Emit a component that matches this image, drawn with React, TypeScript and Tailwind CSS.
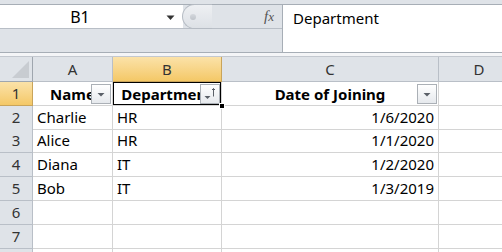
import React from 'react';

const font = { fontFamily: '"Noto Sans", "Open Sans", Arial, sans-serif' };

type Row = { n: number | null; h: string; cells: [string, string, string, string] };

const rows: Row[] = [
  { n: 2, h: 'h-[23px]', cells: ['Charlie', 'HR', '1/6/2020', ''] },
  { n: 3, h: 'h-[24px]', cells: ['Alice', 'HR', '1/1/2020', ''] },
  { n: 4, h: 'h-[24px]', cells: ['Diana', 'IT', '1/2/2020', ''] },
  { n: 5, h: 'h-[24px]', cells: ['Bob', 'IT', '1/3/2019', ''] },
  { n: 6, h: 'h-[24px]', cells: ['', '', '', ''] },
  { n: 7, h: 'h-[24px]', cells: ['', '', '', ''] },
  // next row only peeks in at the bottom edge
  { n: null, h: 'h-[24px]', cells: ['', '', '', ''] },
];

const gridCols = 'grid grid-cols-[33px_80px_109px_217px_80px]';

function FilterButton({ sorted }: { sorted?: boolean }) {
  return (
    <div className="absolute right-[1px] top-[2px] h-[20px] w-[20px] border border-[#abb0b6] bg-gradient-to-b from-white to-[#e6e9ed]">
      <svg width="18" height="18" viewBox="0 0 18 18" className="block">
        {sorted ? (
          <>
            <path d="M3.5 11h6l-3 3z" fill="#5b6068" />
            <path d="M12.5 3.5v8" stroke="#5b6068" strokeWidth="1" />
            <path d="M11 5l1.5-1.5L14 5" stroke="#5b6068" strokeWidth="1" fill="none" />
          </>
        ) : (
          <path d="M5.5 8h7l-3.5 3.5z" fill="#5b6068" />
        )}
      </svg>
    </div>
  );
}

function HeaderCell({ text, sorted, selected }: { text: string; sorted?: boolean; selected?: boolean }) {
  return (
    <div className="relative flex h-[24px] items-center justify-center overflow-hidden border-b border-r border-[#d4d4d4] bg-white pt-[1px] text-[15px] font-bold text-black">
      <span className="whitespace-nowrap">{text}</span>
      <FilterButton sorted={sorted} />
      {selected && (
        <div className="pointer-events-none absolute -left-[1px] -top-[1px] bottom-[-1px] right-[-1px] border-2 border-black" />
      )}
    </div>
  );
}

export default function App() {
  return (
    <div className="relative h-[252px] w-[502px] overflow-hidden bg-white" style={font}>
      {/* formula bar */}
      <div className="h-[4px] bg-[#dfe3e8]" />
      <div className="flex h-[49px] border-y border-[#a7aeb6] bg-[#dfe3e8]">
        <div className="flex w-[283px] flex-col border-r border-[#a7aeb6]">
          <div className="flex h-[24px] border-b border-[#b8bec6]">
            <div className="relative flex w-[183px] items-center bg-white">
              <span className="w-[160px] text-center text-[16px] text-black">B1</span>
              <svg width="9" height="6" viewBox="0 0 9 6" className="absolute left-[166px] top-[10px]">
                <path d="M0.5 0.5h8l-4 4.5z" fill="#333" />
              </svg>
            </div>
            <div className="relative flex flex-1 items-center">
              <div className="absolute -left-[1px] top-[-1px] flex h-[25px] w-[30px] items-center rounded-l-full border border-r-0 border-[#b5bbc3] bg-gradient-to-b from-[#eef0f3] to-[#dde1e6] pl-[7px]">
                <div className="h-[6px] w-[6px] rounded-full bg-gradient-to-b from-[#d4d8dd] to-[#bfc4ca]" />
              </div>
              <span className="ml-auto mr-[8px] text-[15px] italic text-[#555]" style={{ fontFamily: '"Liberation Serif", serif' }}>
                f<span className="text-[13px]">x</span>
              </span>
            </div>
          </div>
          <div className="flex-1" />
        </div>
        <div className="flex-1 bg-white pl-[10px] pt-[2px] text-[15px] text-black">Department</div>
      </div>
      <div className="h-[3px] bg-[#f4f5f7]" />

      {/* column headers */}
      <div className={`${gridCols} h-[26px] border-t border-[#c3c8cf] text-[15px] text-[#333]`}>
        <div className="relative border-b border-r border-[#9fa6ae] bg-[#dfe3e8]">
          <svg width="18" height="18" viewBox="0 0 18 18" className="absolute bottom-[2px] right-[2px]">
            <path d="M17 0v17H0z" fill="#c8ccd1" />
          </svg>
        </div>
        <div className="flex items-center justify-center border-b border-r border-[#b9bfc7] bg-[#dfe3e8]">A</div>
        <div className="flex items-center justify-center border-b border-r border-[#c9a45a] bg-gradient-to-b from-[#fbe2a8] to-[#f4c866]">B</div>
        <div className="flex items-center justify-center border-b border-r border-[#b9bfc7] bg-[#dfe3e8]">C</div>
        <div className="flex items-center justify-center border-b border-[#b9bfc7] bg-[#dfe3e8]">D</div>
      </div>

      {/* row 1 */}
      <div className={`${gridCols} h-[24px]`}>
        <div className="flex items-center justify-center border-b border-r border-[#c9a45a] bg-gradient-to-b from-[#fbe2a8] to-[#f4c866] text-[15px] text-[#333]">1</div>
        <HeaderCell text="Name" />
        <HeaderCell text="Department" sorted selected />
        <HeaderCell text="Date of Joining" />
        <div className="border-b border-[#d4d4d4]" />
      </div>

      {/* data rows */}
      {rows.map((r, i) => (
        <div key={i} className={`${gridCols} ${r.h} text-[15px] text-black`}>
          <div className="flex items-center justify-center border-b border-r border-[#b9bfc7] bg-[#dfe3e8] text-[#333]">{r.n ?? ''}</div>
          <div className="flex items-center border-b border-r border-[#d4d4d4] pl-[4px]">{r.cells[0]}</div>
          <div className="flex items-center border-b border-r border-[#d4d4d4] pl-[4px]">{r.cells[1]}</div>
          <div className="flex items-center justify-end border-b border-r border-[#d4d4d4] pr-[4px]">{r.cells[2]}</div>
          <div className="border-b border-[#d4d4d4]" />
        </div>
      ))}

      {/* fill handle */}
      <div className="absolute left-[219px] top-[103px] h-[6px] w-[6px] border border-white bg-black" />
    </div>
  );
}
